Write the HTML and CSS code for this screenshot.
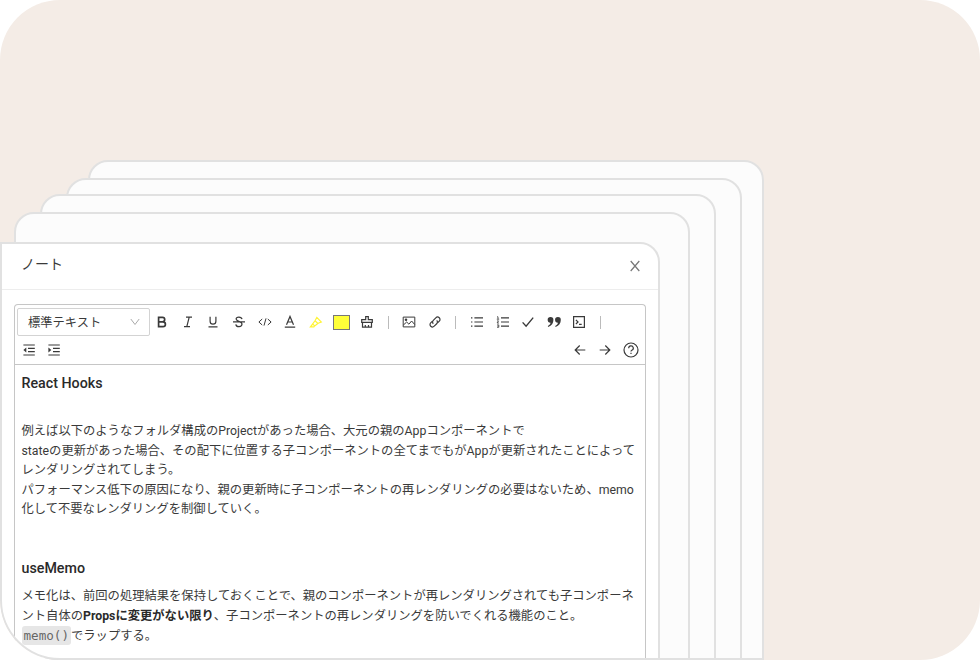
FILE: index.html
```
<!DOCTYPE html>
<html lang="ja">
<head>
<meta charset="utf-8">
<title>ノート</title>
<link rel="stylesheet" href="styles.css">
</head>
<body>
<main class="stage">
  <div class="sheet sheet-4"></div>
  <div class="sheet sheet-3"></div>
  <div class="sheet sheet-2"></div>
  <div class="sheet sheet-1"></div>
  <section class="note">
    <header class="note-header">
      <h1>ノート</h1>
      <svg class="close" viewBox="0 0 12 12"><path d="M1.7 1 10.3 11M10.3 1 1.7 11"/></svg>
    </header>
    <div class="editor">
      <div class="toolbar">
        <div class="row">
          <div class="select"><span>標準テキスト</span><svg viewBox="0 0 10 8"><path d="M.8 1 5 6.5 9.2 1"/></svg></div>
          <span class="tool"><svg viewBox="0 0 14 14"><path class="heavy" d="M3.6 2.4H7.5a2.2 2.2 0 0 1 0 4.4H3.6zM3.6 6.8H8a2.4 2.4 0 0 1 0 4.8H3.6z"/></svg></span>
          <span class="tool"><svg viewBox="0 0 14 14"><path d="M5 2.1h6M3 11.6h6M8.2 2.1 5.8 11.6"/></svg></span>
          <span class="tool"><svg viewBox="0 0 14 14"><path d="M4.1 1.8v4.5a2.9 2.9 0 0 0 5.8 0V1.8M2.5 11.8h9"/></svg></span>
          <span class="tool"><svg viewBox="0 0 14 14"><path d="M10 4.2C9.5 1.3 4.2 1.4 4.1 4.1 4.1 6.5 10 6.2 10 9.1c0 3.3-5.7 3.4-6.2.2M1 6.8h12"/></svg></span>
          <span class="tool"><svg viewBox="0 0 14 14"><path class="thin" d="M4.2 4 .9 7l3.3 3M9.8 4l3.3 3-3.3 3M8 3.4 6 10.6"/></svg></span>
          <span class="tool"><svg viewBox="0 0 14 14"><path d="M3.5 9.8 7 1.4l3.5 8.4M4.7 7h4.6M1.8 12.2h10.4"/></svg></span>
          <span class="tool marker"><svg viewBox="0 0 14 14"><path d="m7.8 2.4 4.5 4.7-3.1 1.2-3.5 2.6-2-2L6.3 5.3zM6 5.8l3.2 3M3.7 9 1.4 11.8h3.5l.8-.9"/></svg></span>
          <span class="tool"><i class="swatch"></i></span>
          <span class="tool"><svg viewBox="0 0 14 14"><path d="M5.7 4.6V1.6h2.6v3h4v2.8H1.7V4.6zM2.5 7.4v4.8h9V7.4M5.3 12V9.9M8.5 12V9.9"/></svg></span>
          <span class="divider"></span>
          <span class="tool"><svg viewBox="0 0 14 14"><path class="thin" d="M1.2 2.1h11.6v9.8H1.2zM1.4 10l3.3-3 2.2 2.2L9.6 6l3.1 3.5"/><circle cx="4" cy="4.7" r=".7"/></svg></span>
          <span class="tool"><svg viewBox="0 0 14 14"><path d="M5.3 8.7a2.4 2.4 0 0 1 0-3.4l2.5-2.5a2.4 2.4 0 0 1 3.5 3.4L9.8 7.7M8.7 5.3a2.4 2.4 0 0 1 0 3.4l-2.5 2.5a2.4 2.4 0 0 1-3.5-3.4l1.5-1.5"/></svg></span>
          <span class="divider"></span>
          <span class="tool"><svg viewBox="0 0 14 14"><path d="M4.4 2.8H13M4.4 7H13M4.4 11.2H13M1 2.8h1.4M1 7h1.4M1 11.2h1.4"/></svg></span>
          <span class="tool"><svg viewBox="0 0 14 14"><path d="M5 2.8h8M5 7h8M5 11.2h8"/><path class="fine" d="M1 1.8h1v2.4M.8 4.2h2.4M1 5.9h1.6L1 8h2M1 9.9h1.8v2.4H1M1.3 11.1h1.4"/></svg></span>
          <span class="tool"><svg viewBox="0 0 14 14"><path class="check" d="m1.6 7.4 3.5 3.8 7.1-8.6"/></svg></span>
          <span class="tool"><svg class="wide" viewBox="0 0 16 14"><path class="fill" d="M4.5 2a2.9 2.9 0 0 1 2.9 3.1c0 3.3-1.7 5.7-5.2 6.9l-.4-1.1c1.7-.8 2.6-1.9 2.7-3.2A2.8 2.8 0 1 1 4.5 2zM11.9 2a2.9 2.9 0 0 1 2.9 3.1c0 3.3-1.7 5.7-5.2 6.9l-.4-1.1c1.7-.8 2.6-1.9 2.7-3.2A2.8 2.8 0 1 1 11.9 2z"/></svg></span>
          <span class="tool"><svg viewBox="0 0 14 14"><path d="M1.6 1.6h10.8v10.8H1.6z"/><path d="M3.9 4.9 6 7 3.9 9M7 9.3h2.7"/></svg></span>
          <span class="divider"></span>
        </div>
        <div class="row second">
          <span class="tool"><svg viewBox="0 0 14 14"><path d="M1.4 2h11.4M6 5.3h6.8M6 8.6h6.8M1.4 12h11.4"/><path class="fill" d="M4.3 4.6v4.8L1.4 7z"/></svg></span>
          <span class="tool"><svg viewBox="0 0 14 14"><path d="M1.4 2h11.4M6 5.3h6.8M6 8.6h6.8M1.4 12h11.4"/><path class="fill" d="M1.4 4.6v4.8L4.3 7z"/></svg></span>
          <span class="spacer"></span>
          <span class="tool"><svg viewBox="0 0 14 14"><path d="M12.3 7H2.2M6.7 2.5 2.2 7l4.5 4.5"/></svg></span>
          <span class="tool"><svg viewBox="0 0 14 14"><path d="M1.7 7h10.1M7.3 2.5 11.8 7l-4.5 4.5"/></svg></span>
          <span class="tool"><svg class="help" viewBox="0 0 16 16"><circle cx="8" cy="8" r="7"/><path d="M5.7 6.2A2.3 2.3 0 1 1 8.8 8.3c-.6.3-.8.6-.8 1.3M8 10.8v1.3"/></svg></span>
        </div>
      </div>
      <article class="content">
        <h2>React Hooks</h2>
        <p class="intro">例えば以下のようなフォルダ構成のProjectがあった場合、大元の親のAppコンポーネントで<br>stateの更新があった場合、その配下に位置する子コンポーネントの全てまでもがAppが更新されたことによって<br>レンダリングされてしまう。<br>パフォーマンス低下の原因になり、親の更新時に子コンポーネントの再レンダリングの必要はないため、memo<br>化して不要なレンダリングを制御していく。</p>
        <h2>useMemo</h2>
        <p class="detail">メモ化は、前回の処理結果を保持しておくことで、親のコンポーネントが再レンダリングされても子コンポーネ<br>ント自体の<b>Propsに変更がない限り</b>、子コンポーネントの再レンダリングを防いでくれる機能のこと。<br><code>memo()</code>でラップする。</p>
      </article>
    </div>
  </section>
</main>
</body>
</html>
```
FILE: styles.css
```
* { box-sizing: border-box; }
body {
  margin: 0;
  background: #fff;
  color: #3a3a3a;
  font-family: Roboto, "Noto Sans CJK JP", sans-serif;
}
.stage {
  display: grid;
  width: 980px;
  height: 660px;
  overflow: hidden;
  border-radius: 60px;
  background: #f4ece6;
}
.sheet, .note {
  grid-area: 1 / 1;
  border: 2px solid #e1e1e1;
}
.sheet {
  width: 676px;
  border-radius: 20px 20px 0 0;
  background: #fcfcfc;
}
.sheet-4 { margin: 160px 0 0 88px; }
.sheet-3 { margin: 178px 0 0 66px; }
.sheet-2 { margin: 194px 0 0 40px; }
.sheet-1 { margin: 212px 0 0 14px; }
.note {
  display: flex;
  flex-direction: column;
  width: 660px;
  height: 418px;
  margin-top: 242px;
  overflow: hidden;
  border-radius: 0 20px 0 60px;
  background: #fff;
}
.note-header {
  display: flex;
  flex: none;
  align-items: center;
  justify-content: space-between;
  height: 46px;
  padding: 0 17px 5px 19px;
  border-bottom: 1px solid #ededed;
}
h1 {
  margin: 0;
  font-size: 14px;
  font-weight: 400;
  line-height: 20px;
}
svg {
  width: 14px;
  height: 14px;
  fill: none;
  stroke: #3a3a3a;
  stroke-width: 1.2;
}
.close { width: 12px; height: 12px; margin-top: 4px; stroke: #777; }
.editor {
  display: flex;
  flex: 1;
  flex-direction: column;
  width: 632px;
  margin: 14px 0 0 12px;
  border: 1px solid #c6c6c6;
  border-bottom: 0;
  border-radius: 4px 4px 0 0;
}
.toolbar {
  flex: none;
  height: 60px;
  padding: 3px 2px 0;
  border-bottom: 1px solid #c6c6c6;
}
.row { display: flex; align-items: center; height: 28px; }
.select {
  display: flex;
  align-items: center;
  justify-content: space-between;
  width: 132.5px;
  height: 28px;
  padding: 0 9px 1px 10px;
  border: 1px solid #d3d3d3;
  border-radius: 2px;
  font-size: 12.25px;
}
.select svg { width: 10px; height: 8px; stroke: #aaa; stroke-width: 1; }
.tool {
  display: flex;
  flex: none;
  align-items: center;
  justify-content: center;
  width: 25.6px;
  height: 28px;
}
.second .tool:first-child { margin-left: -1px; }
.second .tool:last-child { margin-right: -.5px; }
.heavy { stroke-width: 1.7; }
.thin { stroke-width: 1; }
.fine { stroke-width: .8; }
.check { stroke-width: 1.4; }
.fill { fill: #3a3a3a; stroke: none; }
.wide { width: 16px; }
.help { width: 16px; height: 16px; }
.marker svg { stroke: #fff436; }
.swatch {
  width: 17px;
  height: 15px;
  border: 1px solid #777;
  background: #ffff38;
}
.divider {
  flex: none;
  width: 1px;
  height: 13px;
  margin: 0 7.8px;
  background: #bbb;
}
.spacer { flex: 1; }
.content { padding: 8px 6px 0 6.5px; white-space: nowrap; }
h2 {
  margin: 0;
  font-size: 14.25px;
  font-weight: 500;
  line-height: 20px;
  color: #2a2a2a;
}
p { margin: 0; font-size: 12.3px; line-height: 19.5px; }
.intro { margin: 29px 0 38px; }
.detail { margin-top: 9.5px; }
b { font-weight: 700; color: #2a2a2a; }
code {
  padding: 2px;
  border-radius: 3px;
  background: #e6e6e6;
  color: #666;
  font-family: "DejaVu Sans Mono", monospace;
  font-size: 12.6px;
}
```
